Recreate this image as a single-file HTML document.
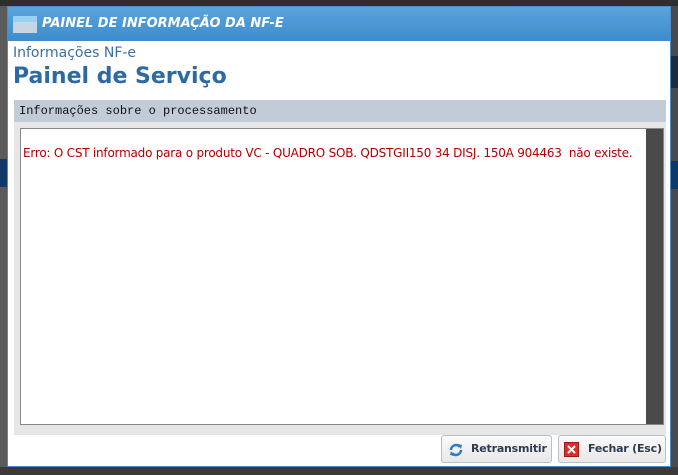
<!DOCTYPE html>
<html><head><meta charset="utf-8"><style>
*{margin:0;padding:0;box-sizing:border-box}
body{width:678px;height:475px;overflow:hidden;background:#555;position:relative;font-family:"DejaVu Sans","Liberation Sans",sans-serif}
.bgtop{position:absolute;left:0;top:0;width:678px;height:6px;background:#2e2e2e}
.bgr{position:absolute;left:671px;top:6px;width:7px;height:469px;background:#4a4a4a}
.bgr .b1{position:absolute;left:0;top:50px;width:7px;height:32px;background:#1f2a3a}
.bgr .b2{position:absolute;left:0;top:155px;width:7px;height:28px;background:#0f3a66}
.bgl .b2{position:absolute;left:0;top:153px;width:7px;height:28px;background:#0f3a66}
.bgb{position:absolute;left:0;top:467px;width:678px;height:8px;background:#3a3a3a}
.dlg{position:absolute;left:7px;top:6px;width:664px;height:461px;background:#fff;border:1px solid #4a8ac8}
.title{height:34px;background:linear-gradient(#5aa4dc,#3e8ccc);position:relative}
.title span{position:absolute;left:34px;top:9px;color:#fff;font-weight:bold;font-style:italic;font-size:13px;font-family:"DejaVu Sans",sans-serif}
.ico{position:absolute;left:5px;top:9px;width:24px;height:17px;background:#c8d6e4}
.ico i{position:absolute;left:0;top:0;width:24px;height:6px;background:#9ad0f4}
.sub{position:absolute;left:5px;top:38px;font-size:14px;color:#3b6ea5}
.h1{position:absolute;left:5px;top:57px;font-size:22px;font-weight:bold;color:#2d6aa3}
.ph{position:absolute;left:6px;top:93px;width:652px;height:22px;background:#c2ccd9;font-family:"Liberation Mono",monospace;font-size:12px;padding:4px 5px;color:#111}
.panel{position:absolute;left:6px;top:115px;width:652px;height:313px;background:#e6e6e6}
.ta{position:absolute;left:6px;top:6px;width:644px;height:297px;background:#fff;border:1px solid #888}
.ta p{position:absolute;left:2px;top:17px;color:#b00000;font-size:12px;font-family:"DejaVu Sans",sans-serif;letter-spacing:-0.22px;white-space:nowrap}
.sb{position:absolute;right:0;top:0;width:17px;height:295px;background:#4a4a4a}
.btn{position:absolute;top:428px;height:28px;border:1px solid #b8c0c8;border-radius:3px;background:linear-gradient(#fafafa,#e8e8e8);font-weight:bold;font-size:11px;color:#2d3e50;padding:6px 0 0 29px;white-space:nowrap;letter-spacing:-0.2px}
</style></head><body>
<div class="bgtop"></div><div class="bgr"><div class="b1"></div><div class="b2"></div></div>
<div class="bgl" style="position:absolute;left:0;top:6px;width:7px;height:461px;background:#5a5a5a"><div class="b2"></div></div>
<div class="bgb"></div>
<div class="dlg">
<div class="title"><div class="ico"><i></i></div><span>PAINEL DE INFORMAÇÃO DA NF-E</span></div>
<div class="sub">Informações NF-e</div>
<div class="h1">Painel de Serviço</div>
<div class="ph">Informações sobre o processamento</div>
<div class="panel"><div class="ta"><p>Erro: O CST informado para o produto VC - QUADRO SOB. QDSTGII150 34 DISJ. 150A 904463&nbsp; não existe.</p><div class="sb"></div></div></div>
<div class="btn" style="left:433px;width:111px">
<svg style="position:absolute;left:6px;top:6px" width="16" height="16" viewBox="0 0 16 16"><path d="M3 8a5 5 0 0 1 9-3" stroke="#2e7bc0" stroke-width="2.5" fill="none"/><path d="M13 8a5 5 0 0 1-9 3" stroke="#2e7bc0" stroke-width="2.5" fill="none"/><path d="M10 2l4 1-1 4z" fill="#2e7bc0"/><path d="M6 14l-4-1 1-4z" fill="#2e7bc0"/></svg>Retransmitir</div>
<div class="btn" style="left:550px;width:108px">
<svg style="position:absolute;left:5px;top:6px" width="15" height="15" viewBox="0 0 15 15"><rect x="0.5" y="0.5" width="14" height="14" fill="#d8302c" stroke="#a01818"/><path d="M4 4l7 7M11 4l-7 7" stroke="#fff" stroke-width="2"/></svg>Fechar (Esc)</div>
</div>
</body></html>
